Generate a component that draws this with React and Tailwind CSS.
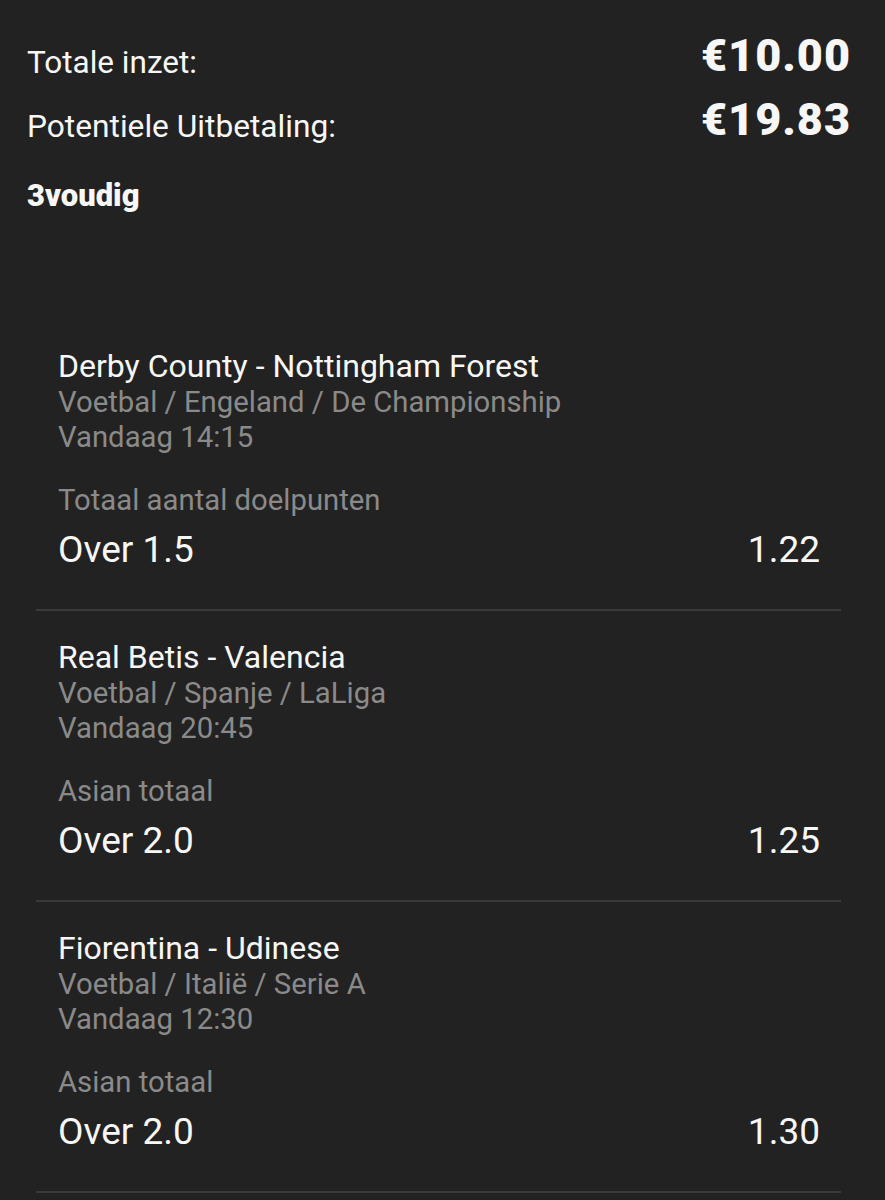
export default function App() {
  const legs = [
    {
      match: "Derby County - Nottingham Forest",
      path: "Voetbal / Engeland / De Championship",
      time: "Vandaag 14:15",
      market: "Totaal aantal doelpunten",
      pick: "Over 1.5",
      odds: "1.22",
    },
    {
      match: "Real Betis - Valencia",
      path: "Voetbal / Spanje / LaLiga",
      time: "Vandaag 20:45",
      market: "Asian totaal",
      pick: "Over 2.0",
      odds: "1.25",
    },
    {
      match: "Fiorentina - Udinese",
      path: "Voetbal / Italië / Serie A",
      time: "Vandaag 12:30",
      market: "Asian totaal",
      pick: "Over 2.0",
      odds: "1.30",
    },
  ];

  return (
    <div className="min-h-[1200px] w-[885px] bg-[#222222] font-['Roboto',sans-serif] text-[#f7f7f7]">
      {/* Bet summary */}
      <div className="pl-[27px] pr-[34px] pt-[24px]">
        <div className="flex h-[64px] items-baseline justify-between">
          <span className="text-[31.5px] leading-[64px] translate-y-[2px]">Totale inzet:</span>
          <span className="text-[45px] font-black leading-[64px] tracking-[1px]">€10.00</span>
        </div>
        <div className="flex h-[64px] items-baseline justify-between">
          <span className="text-[31.7px] leading-[64px] translate-y-[2px]">Potentiele Uitbetaling:</span>
          <span className="text-[45px] font-black leading-[64px] tracking-[1px]">€19.83</span>
        </div>
        <div className="mt-[24px] text-[31px] font-black leading-[40px]">3voudig</div>
      </div>

      {/* Selections */}
      <div className="ml-[36px] mr-[44px] mt-[104px]">
        {legs.map((leg) => (
          <div key={leg.match} className="border-b-2 border-[#3a3a3a] pb-[35px] pl-[22px] pr-[21px] pt-[28px]">
            <div className="text-[32px] leading-[36px]">{leg.match}</div>
            <div className="text-[29.3px] leading-[36px] text-[#8a8a8a]">{leg.path}</div>
            <div className="text-[29.3px] leading-[35px] text-[#8a8a8a]">{leg.time}</div>
            <div className="mt-[27px] text-[29.3px] leading-[36px] text-[#8a8a8a]">{leg.market}</div>
            <div className="mt-[8px] flex items-baseline justify-between text-[37px] leading-[48px]">
              <span>{leg.pick}</span>
              <span>{leg.odds}</span>
            </div>
          </div>
        ))}
      </div>
    </div>
  );
}
